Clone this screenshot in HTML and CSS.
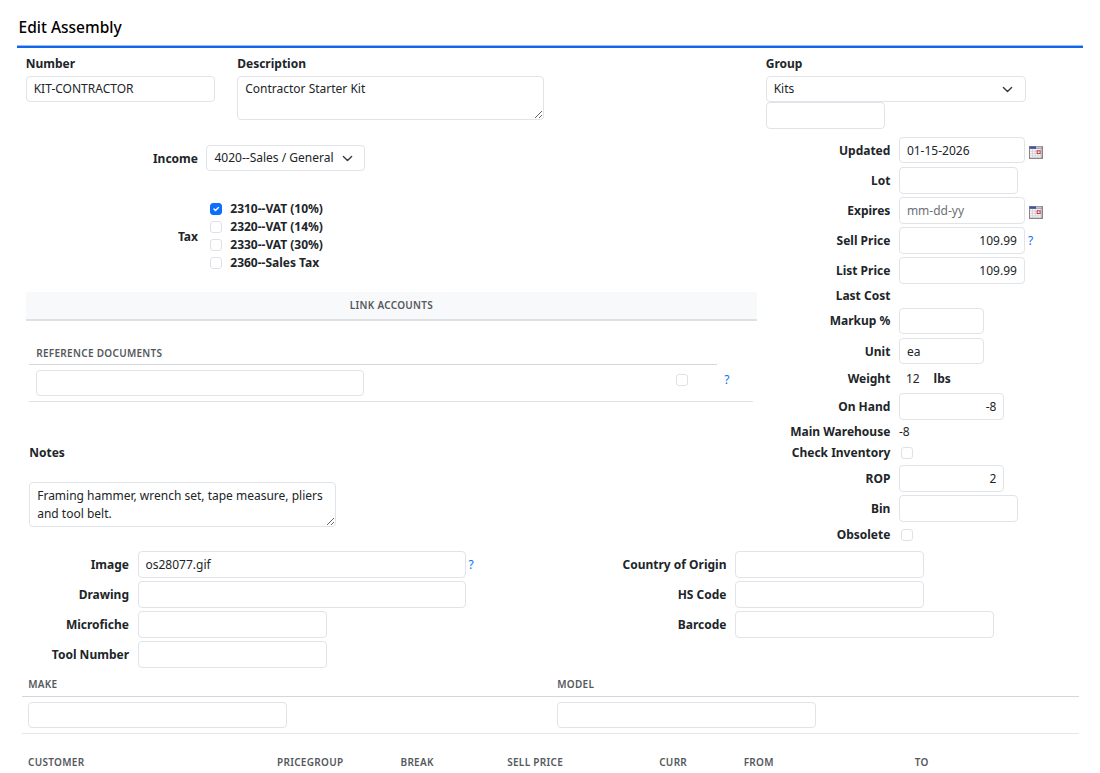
FILE: index.html
```html
<!DOCTYPE html>
<html lang="en">
<head>
  <meta charset="UTF-8">
  <title>Edit Assembly</title>
  <link rel="stylesheet" href="styles.css">
</head>
<body>
  <svg class="defs" width="0" height="0">
    <symbol id="cal" viewBox="0 0 14 13">
      <rect x="0" y="0" width="14" height="13" fill="#8d8583"/>
      <rect x="1" y="3" width="11.5" height="8.7" fill="#f6f4f7"/>
      <rect x="0.6" y="0.6" width="6.4" height="2" fill="#3f4fae"/>
      <rect x="7" y="0.6" width="5.6" height="2" fill="#c3c4d2"/>
      <path d="M3.5 3v9M6.2 3v9M8.9 3v9M11.6 3v9M1 5.2h11.5M1 7.5h11.5M1 9.8h11.5" stroke="#c9c5cf" stroke-width="0.6"/>
      <rect x="8.2" y="4.8" width="2.9" height="2.7" fill="#fff" stroke="#c2434a" stroke-width="1.1"/>
    </symbol>
  </svg>
  <form class="page">
    <h1 class="listtop">Edit Assembly</h1>

    <div class="main">
      <div class="left">
        <div class="top">
          <div class="field w-number">
            <label for="partnumber">Number</label>
            <input type="text" id="partnumber" class="w189" value="KIT-CONTRACTOR">
          </div>
          <div class="field">
            <label for="description">Description</label>
            <textarea id="description">Contractor Starter Kit</textarea>
          </div>
        </div>

        <div class="row income">
          <label for="income">Income</label>
          <select id="income" class="w159"><option>4020--Sales / General</option></select>
        </div>

        <div class="row tax">
          <label>Tax</label>
          <div class="checks">
            <label><input type="checkbox" checked>2310--VAT (10%)</label>
            <label><input type="checkbox">2320--VAT (14%)</label>
            <label><input type="checkbox">2330--VAT (30%)</label>
            <label><input type="checkbox">2360--Sales Tax</label>
          </div>
        </div>

        <div class="listheading">Link Accounts</div>

        <div class="refdocs">
          <div class="th">Reference Documents</div>
          <div class="refrow">
            <input type="text" class="w328">
            <input type="checkbox">
            <a class="help">?</a>
          </div>
        </div>

        <div class="notes">
          <label for="notes">Notes</label>
          <textarea id="notes">Framing hammer, wrench set, tape measure, pliers and tool belt.</textarea>
        </div>
      </div>

      <div class="right">
        <div class="field group">
          <label for="partsgroup">Group</label>
          <select id="partsgroup" class="w260"><option>Kits</option></select>
          <input type="text" class="w119">
        </div>
        <div class="row"><label>Updated</label><input type="text" class="w126" value="01-15-2026"><svg class="cal"><use href="#cal"/></svg></div>
        <div class="row"><label>Lot</label><input type="text" class="w119"></div>
        <div class="row"><label>Expires</label><input type="text" class="w126" placeholder="mm-dd-yy"><svg class="cal"><use href="#cal"/></svg></div>
        <div class="row"><label>Sell Price</label><input type="text" class="w126 num" value="109.99"><a class="help">?</a></div>
        <div class="row"><label>List Price</label><input type="text" class="w126 num" value="109.99"></div>
        <div class="row lastcost"><label>Last Cost</label></div>
        <div class="row"><label>Markup %</label><input type="text" class="w85"></div>
        <div class="row"><label>Unit</label><input type="text" class="w85" value="ea"></div>
        <div class="row weight"><label>Weight</label><span class="value">12</span><b>lbs</b></div>
        <div class="row"><label>On Hand</label><input type="text" class="w105 num" value="-8"></div>
        <div class="row warehouse"><label>Main Warehouse</label><span>-8</span></div>
        <div class="row check"><label>Check Inventory</label><input type="checkbox"></div>
        <div class="row"><label>ROP</label><input type="text" class="w105 num" value="2"></div>
        <div class="row"><label>Bin</label><input type="text" class="w119"></div>
        <div class="row check"><label>Obsolete</label><input type="checkbox"></div>
      </div>
    </div>

    <div class="files">
      <div class="files-left">
        <div class="row"><label>Image</label><input type="text" class="w328" value="os28077.gif"><a class="help">?</a></div>
        <div class="row"><label>Drawing</label><input type="text" class="w328"></div>
        <div class="row"><label>Microfiche</label><input type="text" class="w189"></div>
        <div class="row"><label>Tool Number</label><input type="text" class="w189"></div>
      </div>
      <div class="files-right">
        <div class="row"><label>Country of Origin</label><input type="text" class="w189"></div>
        <div class="row"><label>HS Code</label><input type="text" class="w189"></div>
        <div class="row"><label>Barcode</label><input type="text" class="w259"></div>
      </div>
    </div>

    <div class="makemodel">
      <div class="mm-head"><span class="th">Make</span><span class="th">Model</span></div>
      <div class="mm-row">
        <input type="text" class="w259">
        <input type="text" class="w259">
      </div>
    </div>

    <div class="customers">
      <span class="th">Customer</span>
      <span class="th">Pricegroup</span>
      <span class="th">Break</span>
      <span class="th">Sell Price</span>
      <span class="th">Curr</span>
      <span class="th">From</span>
      <span class="th">To</span>
    </div>
  </form>
</body>
</html>
```
FILE: styles.css
```css
* { box-sizing: border-box; }
html, body {
  margin: 0;
  padding: 0;
  height: 773px;
  overflow: hidden;
}
body {
  font: 12px/18px "Noto Sans", sans-serif;
  color: #212529;
  background: #fff;
}
.defs { display: block; }
.page { padding: 0 17px; }
.listtop {
  margin: 0;
  height: 48px;
  padding: 16px 1.5px 0;
  font-size: 15.5px;
  line-height: 22px;
  font-weight: 500;
  color: #000;
  border-bottom: 2px solid #1266e8;
  box-shadow: inset 0 -1px #93bdf8;
}
label, b { font-weight: 700; }

/* controls */
input[type=text], select, textarea {
  display: block;
  flex: none;
  margin: 0;
  height: 26.6px;
  padding: 3px 7px;
  font: inherit;
  color: #212529;
  background: #fff;
  border: 1px solid #e0e4e8;
  border-radius: 4px;
  outline: 0;
}
input::placeholder { color: #6c7075; opacity: 1; }
textarea {
  width: 307px;
  height: 44.6px;
  padding-top: 3.6px;
  resize: both;
  overflow: hidden;
}
select {
  appearance: none;
  background: #fff url("data:image/svg+xml,%3Csvg xmlns='http://www.w3.org/2000/svg' viewBox='0 0 16 16'%3E%3Cpath fill='none' stroke='%23343a40' stroke-linecap='round' stroke-linejoin='round' stroke-width='2' d='m2 5 6 6 6-6'/%3E%3C/svg%3E") no-repeat right 12px center / 10.5px 10.5px;
}
input[type=checkbox] {
  appearance: none;
  flex: none;
  width: 12px;
  height: 12px;
  margin: 0;
  background: #fff;
  border: 1px solid #dee2e6;
  border-radius: 3px;
}
input[type=checkbox]:checked {
  border-color: #0d6efd;
  background: #0d6efd url("data:image/svg+xml,%3Csvg xmlns='http://www.w3.org/2000/svg' viewBox='0 0 20 20'%3E%3Cpath fill='none' stroke='%23fff' stroke-linecap='round' stroke-linejoin='round' stroke-width='3' d='m6 10 3 3 6-6'/%3E%3C/svg%3E") center / contain;
}
.num { text-align: right; }
.w85 { width: 85px; }
.w105 { width: 105.5px; }
.w119 { width: 119.5px; }
.w126 { width: 126px; }
.w159 { width: 159px; }
.w189 { width: 189px; }
.w259 { width: 258.6px; }
.w260 { width: 260px; }
.w328 { width: 328px; }
.help { color: #0d6efd; margin-left: 3px; padding-top: 1px; }
.cal { width: 14px; height: 13px; margin: 4px 0 0 4px; }

.th, .listheading {
  font-size: 10px;
  font-weight: 600;
  letter-spacing: 0.3px;
  text-transform: uppercase;
  color: #55595d;
}
.field { display: flex; flex-direction: column; }
.field label { height: 21.4px; padding-top: 0.8px; }
.row {
  display: flex;
  align-items: center;
  height: 30.1px;
}
.row > label { text-align: right; margin-right: 8.5px; padding-top: 1px; }

/* upper part */
.main {
  display: flex;
  gap: 8.5px;
  height: 501.2px;
  padding: 6.2px 0 0 8.7px;
}
.left { width: 731.5px; }
.top { display: flex; height: 88.9px; }
.w-number { width: 211.5px; }
.income > label, .tax > label { width: 172.3px; }
.tax { height: 72px; margin-top: 27.2px; }
.checks { padding-left: 3.3px; }
.checks label {
  display: flex;
  align-items: center;
  gap: 8.5px;
}
.listheading {
  height: 29px;
  margin-top: 19.4px;
  line-height: 27px;
  text-align: center;
  background: #f8f9fb;
  border-bottom: 2px solid #dee0e3;
}
.refdocs { padding: 20px 4px 0 3.5px; }
.refdocs .th {
  width: 688px;
  height: 24.4px;
  padding: 3px 7px 0;
  border-bottom: 1px solid #d3d7db;
}
.refrow {
  display: flex;
  align-items: center;
  height: 37px;
  padding-left: 7px;
  border-bottom: 1px solid #dee2e6;
}
.refrow input[type=checkbox] { margin: -7px 0 0 312px; }
.refrow .help { margin: -8px 0 0 36px; }
.notes { padding: 41.6px 3.5px; }
.notes label { display: block; margin-bottom: 20.4px; }

.right .group { height: 80.9px; }
.right .row > label { width: 124.7px; }
.right .lastcost { height: 20.4px; }
.right .weight { height: 25.4px; }
.right .warehouse { height: 20px; }
.right .check { height: 21.9px; }
.value { padding: 0 14px 0 7px; }
.check input { margin-left: 2.5px; }

/* image, drawing, customs data */
.files { display: flex; height: 124.3px; }
.files-left { width: 597px; }
.files-left .row > label { width: 112px; }
.files-right .row > label { width: 112.5px; }

.makemodel { margin: 0 4px 0 4.5px; }
.mm-head, .mm-row {
  display: grid;
  grid-template-columns: 529px 1fr;
  padding: 0 6.7px;
}
.mm-head { height: 23.5px; border-bottom: 1px solid #d3d7db; line-height: 23px; }
.mm-row {
  height: 37px;
  align-items: center;
  border-bottom: 1.5px solid #e5e7e9;
}
.customers {
  display: grid;
  grid-template-columns: 249px 123.5px 106.7px 152px 84.5px 171px 1fr;
  padding: 19px 11px 0;
}
```
